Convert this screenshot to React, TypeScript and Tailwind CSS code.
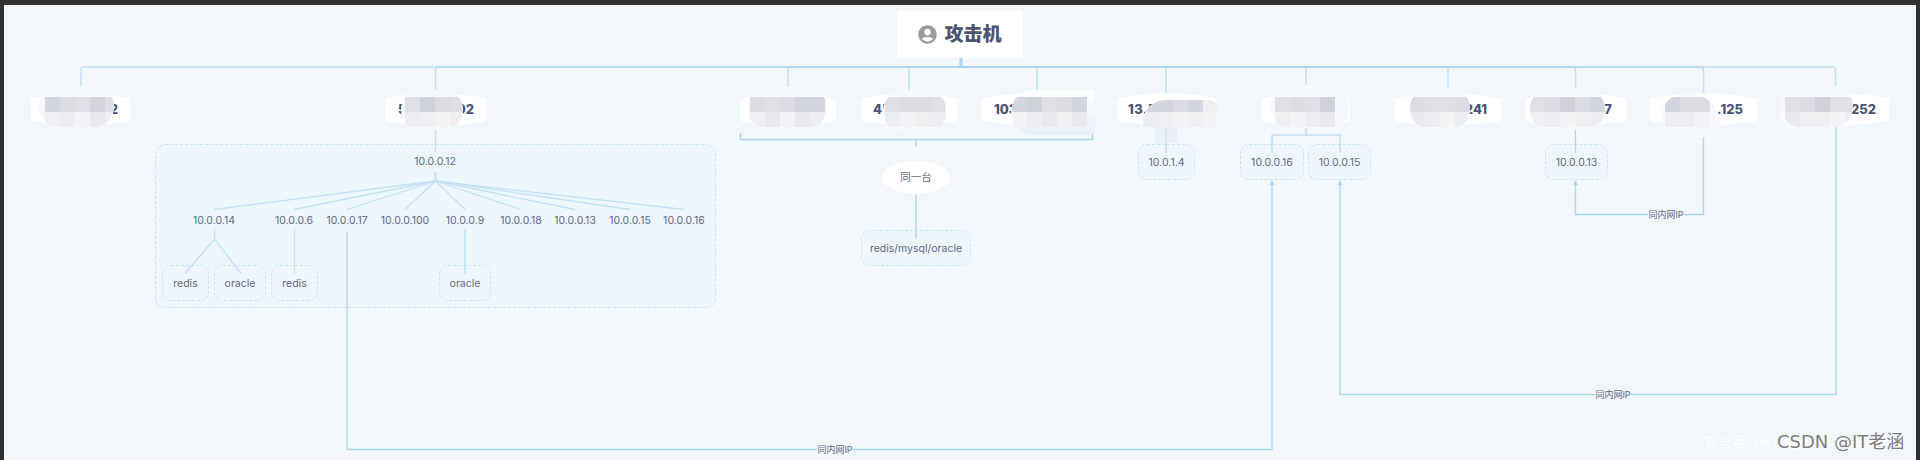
import React from "react";
import { FaUserCircle } from "react-icons/fa";

const font = "font-['Inter','Noto_Sans_CJK_SC',sans-serif]";

// pale mosaic shades used to hide the addresses
const T1 = "bg-[#d3d6de]";
const T2 = "bg-[#dcdde2]";
const T3 = "bg-[#dfe0e4]";
const T4 = "bg-[#d0d2d9]";
const B1 = "bg-[#ecedf0]";
const B2 = "bg-[#efeef1]";
const B3 = "bg-[#f3f3f5]";
const B4 = "bg-[#e9e9ed]";

const pills = [
  { pos: "left-[31px] w-[100px] pl-[12px] pr-[13px]", left: "", right: "2" },
  { pos: "left-[385px] w-[101px] pl-[13px] pr-[12px]", left: "5", right: "02" },
  { pos: "left-[740px] w-[96px] pl-[12px] pr-[12px]", left: "", right: "" },
  { pos: "left-[861px] w-[96px] pl-[12px] pr-[12px]", left: "45", right: "" },
  { pos: "left-[982px] w-[110px] pl-[12px] pr-[12px]", left: "103", right: "" },
  { pos: "left-[1117px] w-[99px] pl-[11px] pr-[12px] tracking-[0.4px]", left: "13.5", right: "" },
  { pos: "left-[1262px] w-[88px] pl-[12px] pr-[12px]", left: "4", right: "" },
  { pos: "left-[1395px] w-[106px] pl-[12px] pr-[14px]", left: "", right: "241" },
  { pos: "left-[1526px] w-[100px] pl-[12px] pr-[14px]", left: "", right: "7" },
  { pos: "left-[1650px] w-[107px] pl-[12px] pr-[14px]", left: "", right: ".125" },
  { pos: "left-[1781px] w-[108px] pl-[12px] pr-[13px]", left: "", right: "252" },
];

const blobs = [
  { box: "left-[39px] top-[86px] w-[75px] h-[41px] rounded-[20px] pl-[6px] pt-[11px]", top: [T1, T2, T3, T1, T3], low: [B2, B1, B3, B4, B2] },
  { box: "left-[401px] top-[90px] w-[62px] h-[40px] rounded-[20px] pl-[4px] pt-[7px]", top: [T3, T4, T2, T3], low: [B1, B2, B3, B2] },
  { box: "left-[748px] top-[87px] w-[78px] h-[41px] rounded-[18px] pl-[2px] pt-[10px]", top: [T2, T3, T2, T1, T1], low: [B2, B4, B3, B4, B1] },
  { box: "left-[883px] top-[90px] w-[64px] h-[43px] rounded-[22px] pl-[2px] pt-[7px]", top: [T3, T2, T2, T3], low: [B1, B3, B2, B1] },
  { box: "left-[1011px] top-[90px] w-[84px] h-[45px] rounded-tl-[24px] rounded-bl-[24px] rounded-br-[6px] pl-[1px] pt-[7px] bg-linear-to-b from-white to-[#e4f0f7]", top: [T1, T4, T3, T2, T1], low: [B3, B1, B4, B2, B4] },
  { box: "left-[1143px] top-[100px] w-[74px] h-[27px] flex flex-col justify-end rounded-tl-[22px] rounded-tr-[8px]", top: [T1, T1, T2, T1, B2], low: [B1, B2, B3, B2, B3] },
  { box: "left-[1271px] top-[85px] w-[78px] h-[43px] rounded-[20px] pl-[4px] pt-[12px]", top: [T3, T2, T3, T4], low: [B2, B3, B1, B4] },
  { box: "left-[1410px] top-[88px] w-[60px] h-[41px] rounded-[20px] pl-[0px] pt-[9px]", top: [T2, T3, T3, T2], low: [B4, B1, B3, B1] },
  { box: "left-[1530px] top-[88px] w-[75px] h-[42px] rounded-[24px] pl-[0px] pt-[9px]", top: [T3, T2, T4, T2, T1], low: [B2, B1, B3, B2, B1] },
  { box: "left-[1662px] top-[95px] w-[57px] h-[42px] rounded-tl-[20px] rounded-tr-[26px] rounded-bl-[14px] rounded-br-[14px] pl-[3px] pt-[2px]", top: [T1, T2, T2], low: [B1, B1, B3] },
  { box: "left-[1781px] top-[86px] w-[72px] h-[41px] rounded-[20px] pl-[4px] pt-[11px]", top: [T3, T2, T4, T3, T3], low: [B4, B2, B2, B3, B1] },
];

const dashedBoxes = [
  { pos: "left-[162px] top-[265px] w-[47px] h-[36px]", text: "redis" },
  { pos: "left-[214px] top-[265px] w-[52px] h-[36px]", text: "oracle" },
  { pos: "left-[271px] top-[265px] w-[47px] h-[36px]", text: "redis" },
  { pos: "left-[439px] top-[265px] w-[52px] h-[36px]", text: "oracle" },
  { pos: "left-[861px] top-[230px] w-[110px] h-[36px]", text: "redis/mysql/oracle" },
  { pos: "left-[1138px] top-[144px] w-[57px] h-[36px]", text: "10.0.1.4" },
  { pos: "left-[1240px] top-[144px] w-[64px] h-[36px]", text: "10.0.0.16" },
  { pos: "left-[1308px] top-[144px] w-[63px] h-[36px]", text: "10.0.0.15" },
  { pos: "left-[1545px] top-[144px] w-[63px] h-[36px]", text: "10.0.0.13" },
];

const hostLabels = [
  { pos: "left-[214px]", text: "10.0.0.14" },
  { pos: "left-[294px]", text: "10.0.0.6" },
  { pos: "left-[347px]", text: "10.0.0.17" },
  { pos: "left-[405px]", text: "10.0.0.100" },
  { pos: "left-[465px]", text: "10.0.0.9" },
  { pos: "left-[521px]", text: "10.0.0.18" },
  { pos: "left-[575px]", text: "10.0.0.13" },
  { pos: "left-[630px]", text: "10.0.0.15" },
  { pos: "left-[684px]", text: "10.0.0.16" },
];

const edgeLabels = [
  "left-[817px] top-[443px]",
  "left-[1595px] top-[388px]",
  "left-[1648px] top-[208px]",
];

const fanEnds = [214, 294, 347, 405, 465, 521, 575, 630, 684];

const drops = [
  "M81 100V70Q81 67 84 67H960",
  "M435.5 100V70Q435.5 67 438.5 67H960",
  "M788 100V70Q788 67 791 67H960",
  "M909 100V70Q909 67 912 67H960",
  "M1037 100V70Q1037 67 1034 67H960",
  "M1166 100V70Q1166 67 1163 67H960",
  "M1306 100V70Q1306 67 1303 67H960",
  "M1448 100V70Q1448 67 1445 67H960",
  "M1575.5 100V70Q1575.5 67 1572.5 67H960",
  "M1703.5 100V70Q1703.5 67 1700.5 67H960",
  "M1835.5 100V70Q1835.5 67 1832.5 67H960",
];

const Connectors = () => (
  <svg
    className="absolute inset-0"
    width="1920"
    height="460"
    viewBox="0 0 1920 460"
    fill="none"
  >
    {/* root bus */}
    <path d="M961 58V67" stroke="#aed7ef" strokeWidth="3" />
    {drops.map((d) => (
      <path key={d} d={d} stroke="#a6d3ee" strokeOpacity="0.62" strokeWidth="1.5" />
    ))}

    {/* 10.0.0.12 subtree */}
    <g stroke="#c2e1f4" strokeWidth="1.3">
      <path d="M435.5 126V152" />
      <path d="M435.5 172V181" strokeWidth="2" />
      {fanEnds.map((x) => (
        <path key={x} d={`M435.5 181L${x} 209.5`} />
      ))}
      <path d="M214.5 229V239L185 273.5M214.5 239L241 273.5" />
      <path d="M294.5 229V274" />
      <path d="M465 229V274" strokeWidth="1.6" />
    </g>

    {/* same-host bracket */}
    <g stroke="#aed7ef" strokeWidth="1.4">
      <path d="M740.5 133V139.5H1092.5V133" strokeWidth="1.6" />
      <path d="M916 140V147" />
      <path d="M916 194V239" />
    </g>

    {/* direct children */}
    <g stroke="#aed7ef" strokeWidth="1.2">
      <path d="M1166 125V153" />
      <path d="M1306 125V135M1272 153V135H1340V153" />
      <path d="M1575.5 128V153" />
    </g>

    {/* same-intranet links */}
    <g stroke="#aed7ef" strokeWidth="1.3">
      <path d="M347 232V449.5H1272V184" />
      <path d="M1836 125V394.5H1340V184" />
      <path d="M1703.5 130V214.5H1575.5V184" />
    </g>
    <g fill="#aed7ef">
      <path d="M1272 180L1274.5 185H1269.5Z" />
      <path d="M1340 180L1342.5 185H1337.5Z" />
      <path d="M1575.5 180L1578 185H1573Z" />
    </g>
  </svg>
);

export default function App() {
  return (
    <div className={`relative w-[1920px] h-[460px] overflow-hidden bg-[#f1f7fa] text-[#5f6884] ${font}`}>
      {/* shaded group around 10.0.0.12 */}
      <div className="absolute left-[155px] top-[144px] w-[561px] h-[164px] rounded-[10px] border border-dashed border-[#c5e3f5] bg-[#edf6fa]" />

      {dashedBoxes.map((b) => (
        <div
          key={b.pos}
          className={`absolute ${b.pos} flex items-center justify-center rounded-[9px] border border-dashed border-[#c5e3f5] bg-[#eff6fb] pt-[1px] text-[10.5px]`}
        >
          {b.text}
        </div>
      ))}

      <Connectors />

      {/* attacker */}
      <div className="absolute left-[897px] top-[11px] w-[126px] h-[47px] flex items-center justify-center gap-[7px] bg-white">
        <FaUserCircle className="w-[19px] h-[19px] text-[#9b9b9b]" />
        <span className="text-[19px] leading-none font-black text-[#4b5472]">攻击机</span>
      </div>

      {/* top level hosts */}
      {pills.map((p) => (
        <div
          key={p.pos}
          className={`absolute ${p.pos} top-[93px] h-[33px] flex items-center justify-between text-[13px] font-extrabold text-[#4b5472]`}
        >
          <svg
            className="absolute inset-0 w-full h-full"
            viewBox="0 0 100 33"
            preserveAspectRatio="none"
          >
            <path
              d="M3 4.5Q50 -3.5 97 4.5Q100 5 100 8V25Q100 28 97 28.5Q50 36.5 3 28.5Q0 28 0 25V8Q0 5 3 4.5Z"
              fill="#fff"
            />
          </svg>
          <span className="relative">{p.left}</span>
          <span className="relative">{p.right}</span>
        </div>
      ))}

      {/* mosaic over the addresses */}
      {blobs.map((b) => (
        <div key={b.box} className={`absolute ${b.box} overflow-hidden bg-[#f6f9fb]`}>
          <div className="flex shrink-0">
            {b.top.map((c, i) => (
              <div key={i} className={`${c} w-[15px] h-[15px] shrink-0`} />
            ))}
          </div>
          <div className="flex shrink-0">
            {b.low.map((c, i) => (
              <div key={i} className={`${c} w-[15px] h-[15px] shrink-0`} />
            ))}
          </div>
        </div>
      ))}
      <div className="absolute left-[1155px] top-[127px] w-[22px] h-[16px] bg-[#dfecf3]/60" />

      <div className="absolute left-[435px] top-[155px] -translate-x-1/2 text-[10.5px] leading-[14px]">
        10.0.0.12
      </div>
      {hostLabels.map((l) => (
        <div
          key={l.pos}
          className={`absolute ${l.pos} top-[214px] -translate-x-1/2 whitespace-nowrap text-[10.5px] leading-[14px]`}
        >
          {l.text}
        </div>
      ))}

      <div className="absolute left-[882px] top-[161px] w-[68px] h-[33px] flex items-center justify-center rounded-[50%] bg-white text-[10.5px]">
        同一台
      </div>

      {edgeLabels.map((pos) => (
        <div
          key={pos}
          className={`absolute ${pos} w-[36px] h-[13px] flex items-center justify-center whitespace-nowrap bg-[#f1f7fa] text-[9px] leading-none`}
        >
          同内网IP
        </div>
      ))}

      {/* watermarks */}
      <div className="absolute left-[1704px] top-[432px] whitespace-nowrap text-[14px] leading-[20px] text-white">
        安全客（www.anquanke.com）
      </div>
      <div className="absolute left-[1777px] top-[430px] whitespace-nowrap font-['DejaVu_Sans','Noto_Sans_CJK_SC',sans-serif] text-[18px] leading-[23px] text-[#7d7d7d] [text-shadow:1px_1px_0_#fff]">
        CSDN @IT老涵
      </div>

      {/* screenshot frame */}
      <div className="absolute inset-0 border-x-4 border-t-[5px] border-[#303030] pointer-events-none" />
    </div>
  );
}
